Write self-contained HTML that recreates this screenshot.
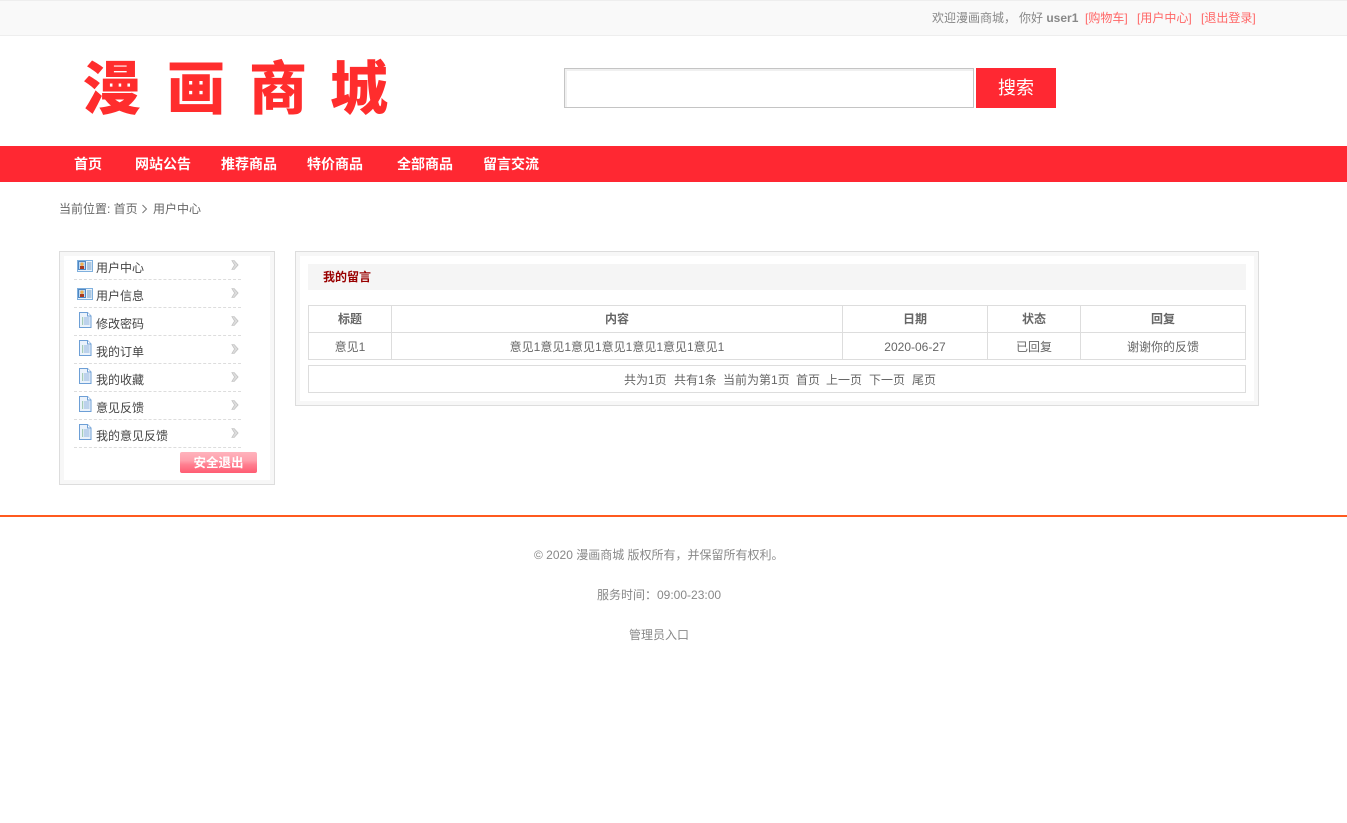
<!DOCTYPE html>
<html lang="zh"><head><meta charset="utf-8"><title>漫画商城</title>
<style>
*{box-sizing:border-box}
html,body{margin:0;padding:0;background:#fff}
body{width:1347px;height:823px;position:relative;overflow:hidden;font:12px/16px "Liberation Sans","Noto Sans CJK SC",sans-serif;color:#666}
.a{position:absolute;white-space:nowrap}
.c{text-align:center}
.nav{color:#fff;font-weight:bold;font-size:14px;top:156px}
.logo{color:#ff2d2d;font-weight:900;font-size:58px;line-height:60px;top:54px;font-family:"Noto Sans CJK SC",sans-serif}
.dash{position:absolute;left:74px;width:167px;height:0;border-top:1px dashed #ddd}
.m{position:absolute;left:96px;color:#444;white-space:nowrap}
.b{position:absolute;background:#ddd}
.th{font-weight:bold;color:#666;top:311px}
.td{top:339px;color:#666}
</style></head><body>
<div class="a" style="left:0;top:0;width:1347px;height:36px;background:#f9f9f9;border-top:1px solid #eee;border-bottom:1px solid #eee"></div>
<div class="a" style="left:932px;top:10px;color:#888">欢迎漫画商城，</div>
<div class="a" style="left:1019px;top:10px;color:#888">你好 <b>user1</b></div>
<div class="a" style="left:1085px;top:10px;color:#f66">[购物车]</div>
<div class="a" style="left:1137px;top:10px;color:#f66">[用户中心]</div>
<div class="a" style="left:1201px;top:10px;color:#f66">[退出登录]</div>

<div class="a logo" style="left:83px">漫</div>
<div class="a logo" style="left:167px">画</div>
<div class="a logo" style="left:249px">商</div>
<div class="a logo" style="left:330px">城</div>

<div class="a" style="left:564px;top:68px;width:410px;height:40px;border:1px solid #c4c4c4;box-shadow:inset 2px 2px 0 #f0f0f0"></div>
<div class="a c" style="left:976px;top:68px;width:80px;height:40px;background:#ff2832;color:#fff;font-size:18px;line-height:41px">搜索</div>

<div class="a" style="left:0;top:146px;width:1347px;height:36px;background:#ff2832"></div>
<div class="a nav" style="left:74px">首页</div>
<div class="a nav" style="left:135px">网站公告</div>
<div class="a nav" style="left:221px">推荐商品</div>
<div class="a nav" style="left:307px">特价商品</div>
<div class="a nav" style="left:397px">全部商品</div>
<div class="a nav" style="left:483px">留言交流</div>

<div class="a" style="left:59px;top:201px;color:#666">当前位置: 首页</div>
<svg class="a" style="left:141px;top:204px" width="7" height="10"><path d="M1.500 1L5.500 5L1.500 9" fill="none" stroke="#777"/></svg>
<div class="a" style="left:153px;top:201px;color:#666">用户中心</div>

<!-- sidebar -->
<div class="a" style="left:59px;top:251px;width:216px;height:234px;border:1px solid #ddd"><div style="width:214px;height:232px;border:4px solid #f7f7f7"></div></div>
<div class="dash" style="top:279px"></div><div class="dash" style="top:307px"></div><div class="dash" style="top:335px"></div><div class="dash" style="top:363px"></div><div class="dash" style="top:391px"></div><div class="dash" style="top:419px"></div><div class="dash" style="top:447px"></div>

<svg width="0" height="0" style="position:absolute"><defs>
<g id="card"><rect x=".5" y=".5" width="15" height="11" fill="#eaf3fb" stroke="#7fb0de"/><rect x="1.500" y="1.500" width="7" height="8" fill="#bcd8f2" stroke="#2f6fb5" stroke-width=".8"/><circle cx="5" cy="4.200" r="1.700" fill="#f0b050"/><rect x="3" y="6" width="4" height="3" fill="#a83a20"/><path d="M10 3h4.500M10 5h4.500M10 7h4.500M10 9h4.500" stroke="#6f9cca"/></g>
<g id="doc"><path d="M.5.500H8.500L12 4V15.500H.5Z" fill="#eaf2fb" stroke="#6d9fd6"/><path d="M8.500 .5V4H12" fill="#fff" stroke="#6d9fd6"/><path d="M5 6h5.500M5 8h5.500M5 10h5.500M5 12h5.500" stroke="#8db2dc"/><path d="M3 6h1.200M3 8h1.200M3 10h1.200M3 12h1.200" stroke="#5ea670"/></g>
<g id="ar"><path d="M.8 .5L3.200 .5L7.200 5L3.200 9.500L.8 9.500L3.500 5Z" fill="#dcdcdc" stroke="#bbb" stroke-width=".6"/></g>
</defs></svg>
<svg class="a" style="left:77px;top:260px" width="16" height="12"><use href="#card"/></svg>
<svg class="a" style="left:77px;top:288px" width="16" height="12"><use href="#card"/></svg>
<svg class="a" style="left:79px;top:312px" width="13" height="16"><use href="#doc"/></svg>
<svg class="a" style="left:79px;top:340px" width="13" height="16"><use href="#doc"/></svg>
<svg class="a" style="left:79px;top:368px" width="13" height="16"><use href="#doc"/></svg>
<svg class="a" style="left:79px;top:396px" width="13" height="16"><use href="#doc"/></svg>
<svg class="a" style="left:79px;top:424px" width="13" height="16"><use href="#doc"/></svg>
<svg class="a" style="left:231px;top:260px" width="8" height="10"><use href="#ar"/></svg>
<svg class="a" style="left:231px;top:288px" width="8" height="10"><use href="#ar"/></svg>
<svg class="a" style="left:231px;top:316px" width="8" height="10"><use href="#ar"/></svg>
<svg class="a" style="left:231px;top:344px" width="8" height="10"><use href="#ar"/></svg>
<svg class="a" style="left:231px;top:372px" width="8" height="10"><use href="#ar"/></svg>
<svg class="a" style="left:231px;top:400px" width="8" height="10"><use href="#ar"/></svg>
<svg class="a" style="left:231px;top:428px" width="8" height="10"><use href="#ar"/></svg>
<div class="m" style="top:260px">用户中心</div>
<div class="m" style="top:288px">用户信息</div>
<div class="m" style="top:316px">修改密码</div>
<div class="m" style="top:344px">我的订单</div>
<div class="m" style="top:372px">我的收藏</div>
<div class="m" style="top:400px">意见反馈</div>
<div class="m" style="top:428px">我的意见反馈</div>
<div class="a c" style="left:180px;top:452px;width:77px;height:21px;border-radius:2px;background:linear-gradient(#ffb3bd 0,#ffa0ac 40%,#ff7f90 60%,#ff5c72 100%);color:#fff;font-weight:bold;line-height:23px;font-size:12.500px">安全退出</div>

<!-- main panel -->
<div class="a" style="left:295px;top:251px;width:964px;height:155px;border:1px solid #ddd"><div style="width:962px;height:153px;border:4px solid #f7f7f7"></div></div>
<div class="a" style="left:308px;top:264px;width:938px;height:26px;background:#f5f5f5"></div>
<div class="a" style="left:323px;top:269px;color:#900;font-weight:bold">我的留言</div>

<div class="a" style="left:308px;top:305px;width:938px;height:55px;border:1px solid #ddd"></div>
<div class="b" style="left:308px;top:332px;width:938px;height:1px"></div>
<div class="b" style="left:391px;top:305px;width:1px;height:55px"></div>
<div class="b" style="left:842px;top:305px;width:1px;height:55px"></div>
<div class="b" style="left:987px;top:305px;width:1px;height:55px"></div>
<div class="b" style="left:1080px;top:305px;width:1px;height:55px"></div>

<div class="a c th" style="left:309px;width:82px">标题</div>
<div class="a c th" style="left:392px;width:450px">内容</div>
<div class="a c th" style="left:843px;width:144px">日期</div>
<div class="a c th" style="left:988px;width:92px">状态</div>
<div class="a c th" style="left:1081px;width:164px">回复</div>
<div class="a c td" style="left:309px;width:82px">意见1</div>
<div class="a c td" style="left:392px;width:450px">意见1意见1意见1意见1意见1意见1意见1</div>
<div class="a c td" style="left:843px;width:144px">2020-06-27</div>
<div class="a c td" style="left:988px;width:92px">已回复</div>
<div class="a c td" style="left:1081px;width:164px">谢谢你的反馈</div>

<div class="a" style="left:308px;top:365px;width:938px;height:28px;border:1px solid #ddd"></div>
<div class="a" style="left:624px;top:372px">共为1页</div>
<div class="a" style="left:674px;top:372px">共有1条</div>
<div class="a" style="left:723px;top:372px">当前为第1页</div>
<div class="a" style="left:796px;top:372px">首页</div>
<div class="a" style="left:826px;top:372px">上一页</div>
<div class="a" style="left:869px;top:372px">下一页</div>
<div class="a" style="left:912px;top:372px">尾页</div>

<!-- footer -->
<div class="a" style="left:0;top:515px;width:1347px;height:2px;background:#ff5a1f"></div>
<div class="a" style="left:534px;top:547px;color:#888">© 2020 漫画商城 版权所有，并保留所有权利。</div>
<div class="a" style="left:597px;top:587px;color:#888">服务时间：09:00-23:00</div>
<div class="a" style="left:629px;top:627px;color:#888">管理员入口</div>
</body></html>
